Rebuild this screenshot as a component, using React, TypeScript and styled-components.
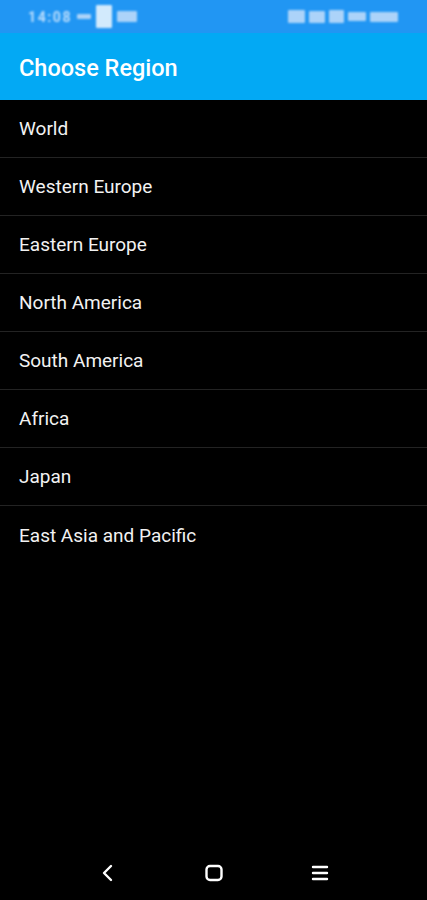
import React from "react";
import styled, { createGlobalStyle } from "styled-components";

const Global = createGlobalStyle`
  html, body { margin: 0; padding: 0; background: #000; }
  body { font-family: Roboto, "Noto Sans", sans-serif; }
`;

const Screen = styled.div`
  width: 427px;
  height: 900px;
  background: #000;
  display: flex;
  flex-direction: column;
  overflow: hidden;
`;

const StatusBar = styled.div`
  height: 33px;
  background: #2196f3;
  display: flex;
  align-items: center;
  justify-content: space-between;
  padding: 0 29px 0 28px;
  box-sizing: border-box;
`;

const StatusGroup = styled.div<{ gap: number }>`
  display: flex;
  align-items: center;
  gap: ${(p) => p.gap}px;
  filter: blur(1px);
  opacity: 0.8;
`;

const StatusTime = styled.span`
  color: #e3f0ff;
  font-size: 14px;
  font-weight: 700;
  letter-spacing: 1.6px;
`;

const Blob = styled.div<{ w: number; h: number; strong?: boolean }>`
  width: ${(p) => p.w}px;
  height: ${(p) => p.h}px;
  background: ${(p) => (p.strong ? "#ffffff" : "#cfe3fb")};
  border-radius: 1px;
`;

const AppBar = styled.header`
  height: 67px;
  background: #03a9f4;
  display: flex;
  align-items: center;
  padding: 2px 19px 0;
  box-sizing: border-box;
`;

const Title = styled.h1`
  margin: 0;
  color: #fff;
  font-size: 23.5px;
  font-weight: 500;
`;

const List = styled.ul`
  list-style: none;
  margin: 0;
  padding: 0;
  flex: 1;
`;

const Row = styled.li<{ last?: boolean }>`
  height: 58px;
  display: flex;
  align-items: center;
  padding: 0 19px;
  box-sizing: border-box;
  color: #f2f2f2;
  font-size: 19px;
  border-bottom: ${(p) => (p.last ? "none" : "1px solid #232323")};
`;

const NavBar = styled.nav`
  height: 56px;
  display: flex;
  align-items: center;
  justify-content: space-between;
  padding: 2px 97px 0 98px;
  box-sizing: border-box;
`;

const regions = [
  "World",
  "Western Europe",
  "Eastern Europe",
  "North America",
  "South America",
  "Africa",
  "Japan",
  "East Asia and Pacific",
];

export default function App() {
  return (
    <Screen>
      <Global />
      <StatusBar>
        <StatusGroup gap={5}>
          <StatusTime>14:08</StatusTime>
          <Blob w={14} h={5} />
          <Blob w={16} h={23} strong />
          <Blob w={20} h={11} />
        </StatusGroup>
        <StatusGroup gap={4}>
          <Blob w={17} h={13} />
          <Blob w={16} h={12} />
          <Blob w={15} h={13} />
          <Blob w={18} h={9} />
          <Blob w={28} h={10} />
        </StatusGroup>
      </StatusBar>
      <AppBar>
        <Title>Choose Region</Title>
      </AppBar>
      <List>
        {regions.map((r, i) => (
          <Row key={r} last={i === regions.length - 1}>
            {r}
          </Row>
        ))}
      </List>
      <NavBar>
        <svg width="20" height="20" viewBox="0 0 20 20">
          <path d="M13 3 L6 10 L13 17" fill="none" stroke="#fff" strokeWidth="2.4" strokeLinecap="round" strokeLinejoin="round" />
        </svg>
        <svg width="20" height="20" viewBox="0 0 20 20">
          <rect x="2.5" y="3" width="15" height="14" rx="3.5" fill="none" stroke="#fff" strokeWidth="2.4" />
        </svg>
        <svg width="20" height="20" viewBox="0 0 20 20">
          <path d="M3 4 H17 M3 10 H17 M3 16 H17" fill="none" stroke="#fff" strokeWidth="2.4" strokeLinecap="round" />
        </svg>
      </NavBar>
    </Screen>
  );
}
